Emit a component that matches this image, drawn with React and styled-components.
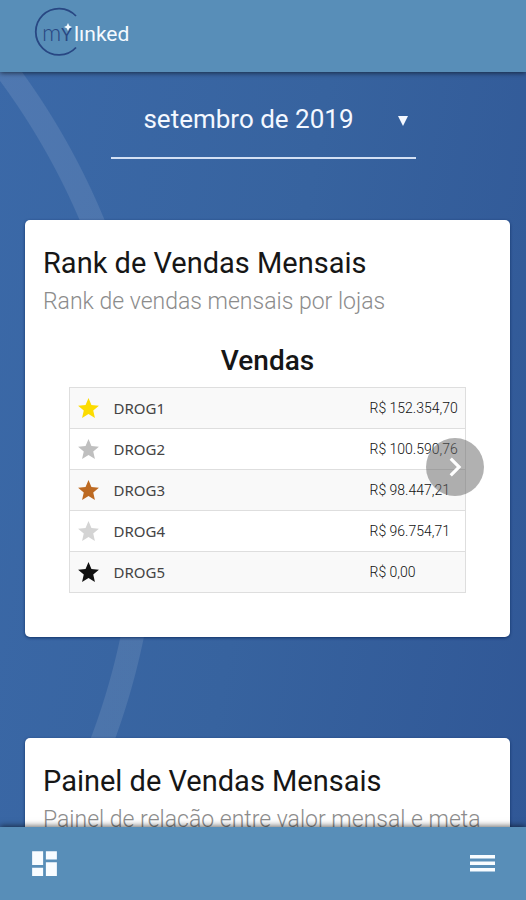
import React, { useState } from "react";
import styled, { createGlobalStyle } from "styled-components";
import { MdDashboard, MdChevronRight, MdStar } from "react-icons/md";

const GlobalStyle = createGlobalStyle`
  *, *::before, *::after { box-sizing: border-box; }
  body { margin: 0; font-family: Roboto, sans-serif; color: #161616; }
  h1, h2, h3, p { margin: 0; }
  button { border: 0; padding: 0; background: none; cursor: pointer; font: inherit; }
`;

const Shell = styled.div`
  display: flex;
  flex-direction: column;
  height: 100vh;
  background:
    radial-gradient(
      circle at -559px 493px,
      transparent 694px,
      rgba(255, 255, 255, 0.1) 695px,
      rgba(255, 255, 255, 0.1) 717px,
      transparent 718px
    ),
    linear-gradient(100deg, #3b69a8 0%, #37639f 50%, #305796 100%);
`;

const TopBar = styled.header`
  display: flex;
  flex: none;
  align-items: center;
  height: 72px;
  padding: 0 35px 8px;
  background: #588eb8;
  box-shadow: 0 1px 5px rgba(0, 0, 0, 0.6);
  z-index: 1;
`;

const Logo = styled.svg`
  display: block;
  overflow: visible;
`;

const LogoMark = styled.text`
  font: 300 24px Lato, sans-serif;
  fill: #284783;
`;

const LogoSmallCap = styled.tspan`
  font-variant-caps: small-caps;
  font-weight: 400;
`;

const LogoName = styled.text`
  font: 400 21px Roboto, sans-serif;
  fill: #f4faff;
`;

const Content = styled.main`
  display: flex;
  flex: 1;
  flex-direction: column;
  min-height: 0;
  padding: 18px 16px 24px 25px;
  overflow-y: auto;
  scrollbar-width: none;
`;

const MonthField = styled.label`
  display: grid;
  flex: none;
  grid-template-columns: 1fr 18px;
  align-items: center;
  align-self: center;
  width: 63%;
  height: 69px;
  margin: 0 8px 61px 0;
  border-bottom: 2px solid #d3e0f4;
  color: #f4f8ff;
`;

const MonthSelect = styled.select`
  grid-area: 1 / 1 / 2 / 3;
  width: 100%;
  height: 48px;
  margin-bottom: 9px;
  padding: 0 30px 0 0;
  border: 0;
  outline: 0;
  background: none;
  color: inherit;
  font: 400 26px/32px Roboto, sans-serif;
  text-align: center;
  text-align-last: center;
  appearance: none;

  option { color: #161616; }
`;

const Caret = styled.svg`
  grid-area: 1 / 2;
  margin-bottom: 6px;
  pointer-events: none;
`;

const Card = styled.section`
  position: relative;
  flex: none;
  margin-bottom: 101px;
  padding: 24px 18px 44px;
  border-radius: 5px;
  background: #fff;
  box-shadow: 0 1px 3px rgba(0, 30, 80, 0.7);
`;

const CardTitle = styled.h2`
  font-size: 29px;
  font-weight: 400;
  line-height: 38px;
`;

const CardSubtitle = styled.p`
  color: #8c8c8c;
  font-size: 23px;
  font-weight: 300;
  line-height: 40px;
`;

const RankTable = styled.table`
  width: calc(100% - 52px);
  margin: 20px 26px 0;
  border-collapse: collapse;
  table-layout: fixed;
`;

const Caption = styled.caption`
  padding-bottom: 7px;
  font-size: 28px;
  font-weight: 500;
  line-height: 38px;
`;

const RankRow = styled.tr`
  height: 41px;
  border: 1px solid #dedede;
  background: #fff;

  &:nth-child(odd) { background: #f9f9f9; }
`;

const StarCell = styled.td`
  width: 44px;
  padding: 0 0 0 6px;
  color: ${(p) => p.$color};

  svg { display: block; }
`;

const StoreCell = styled.th`
  padding: 0;
  color: #444;
  font: 400 15px/20px "Noto Sans", sans-serif;
  text-align: left;
`;

const ValueCell = styled.td`
  width: 96px;
  padding: 0;
  color: #111;
  font-size: 14px;
  font-weight: 300;
  line-height: 20px;
  white-space: nowrap;
`;

const NextButton = styled.button`
  position: absolute;
  top: 218px;
  right: 26px;
  display: grid;
  place-items: center;
  width: 58px;
  height: 58px;
  border-radius: 50%;
  background: rgba(100, 100, 100, 0.5);
  color: #fff;
`;

const BottomBar = styled.nav`
  display: flex;
  flex: none;
  align-items: center;
  justify-content: space-between;
  height: 73px;
  padding: 0 28px;
  background: #588eb8;
  box-shadow: 0 -1px 6px rgba(0, 0, 0, 0.6);
  color: #f8fcff;
  z-index: 1;
`;

const BarButton = styled.button`
  display: grid;
  place-items: center;
  color: inherit;
`;

const stores = [
  { name: "DROG1", value: "R$ 152.354,70", color: "#fcdc00" },
  { name: "DROG2", value: "R$ 100.590,76", color: "#bfbfbf" },
  { name: "DROG3", value: "R$ 98.447,21", color: "#bd6a22" },
  { name: "DROG4", value: "R$ 96.754,71", color: "#d4d4d4" },
  { name: "DROG5", value: "R$ 0,00", color: "#111" },
];

const months = ["julho de 2019", "agosto de 2019", "setembro de 2019"];

function BrandLogo() {
  return (
    <Logo width="98" height="50" viewBox="0 0 98 50" role="img" aria-label="mylinked">
      <path d="M41 9A23.200 23.200 0 1 0 41 40.500" fill="none" stroke="#284783" strokeWidth="1.8" />
      <LogoMark x="7" y="34">
        m<LogoSmallCap>y</LogoSmallCap>
      </LogoMark>
      <path d="M33 16l1.300 2.700 2.700 1.300-2.700 1.300-1.300 2.700-1.300-2.700-2.700-1.300 2.700-1.300z" fill="#f4faff" />
      <LogoName x="39" y="34">lınked</LogoName>
    </Logo>
  );
}

function MenuIcon() {
  return (
    <svg width="33" height="33" viewBox="0 0 33 33" fill="currentColor" aria-hidden="true">
      <rect x="5" y="8" width="25" height="3.500" />
      <rect x="5" y="14.500" width="25" height="3.500" />
      <rect x="5" y="21" width="25" height="3.500" />
    </svg>
  );
}

export default function App() {
  const [month, setMonth] = useState("setembro de 2019");

  return (
    <>
      <GlobalStyle />
      <Shell>
        <TopBar>
          <BrandLogo />
        </TopBar>
        <Content>
          <MonthField>
            <MonthSelect
              aria-label="Mês"
              value={month}
              onChange={(e) => setMonth(e.target.value)}
            >
              {months.map((m) => (
                <option key={m}>{m}</option>
              ))}
            </MonthSelect>
            <Caret width="10" height="10" viewBox="0 0 10 10" aria-hidden="true">
              <path d="M0 0h10L5 10z" fill="currentColor" />
            </Caret>
          </MonthField>

          <Card>
            <CardTitle>Rank de Vendas Mensais</CardTitle>
            <CardSubtitle>Rank de vendas mensais por lojas</CardSubtitle>
            <RankTable>
              <Caption>Vendas</Caption>
              <tbody>
                {stores.map((s) => (
                  <RankRow key={s.name}>
                    <StarCell $color={s.color}>
                      <MdStar size={25} aria-hidden="true" />
                    </StarCell>
                    <StoreCell scope="row">{s.name}</StoreCell>
                    <ValueCell>{s.value}</ValueCell>
                  </RankRow>
                ))}
              </tbody>
            </RankTable>
            <NextButton type="button" aria-label="Próximo">
              <MdChevronRight size={38} />
            </NextButton>
          </Card>

          <Card>
            <CardTitle>Painel de Vendas Mensais</CardTitle>
            <CardSubtitle>Painel de relação entre valor mensal e meta</CardSubtitle>
          </Card>
        </Content>
        <BottomBar>
          <BarButton type="button" aria-label="Painel">
            <MdDashboard size={33} />
          </BarButton>
          <BarButton type="button" aria-label="Menu">
            <MenuIcon />
          </BarButton>
        </BottomBar>
      </Shell>
    </>
  );
}
